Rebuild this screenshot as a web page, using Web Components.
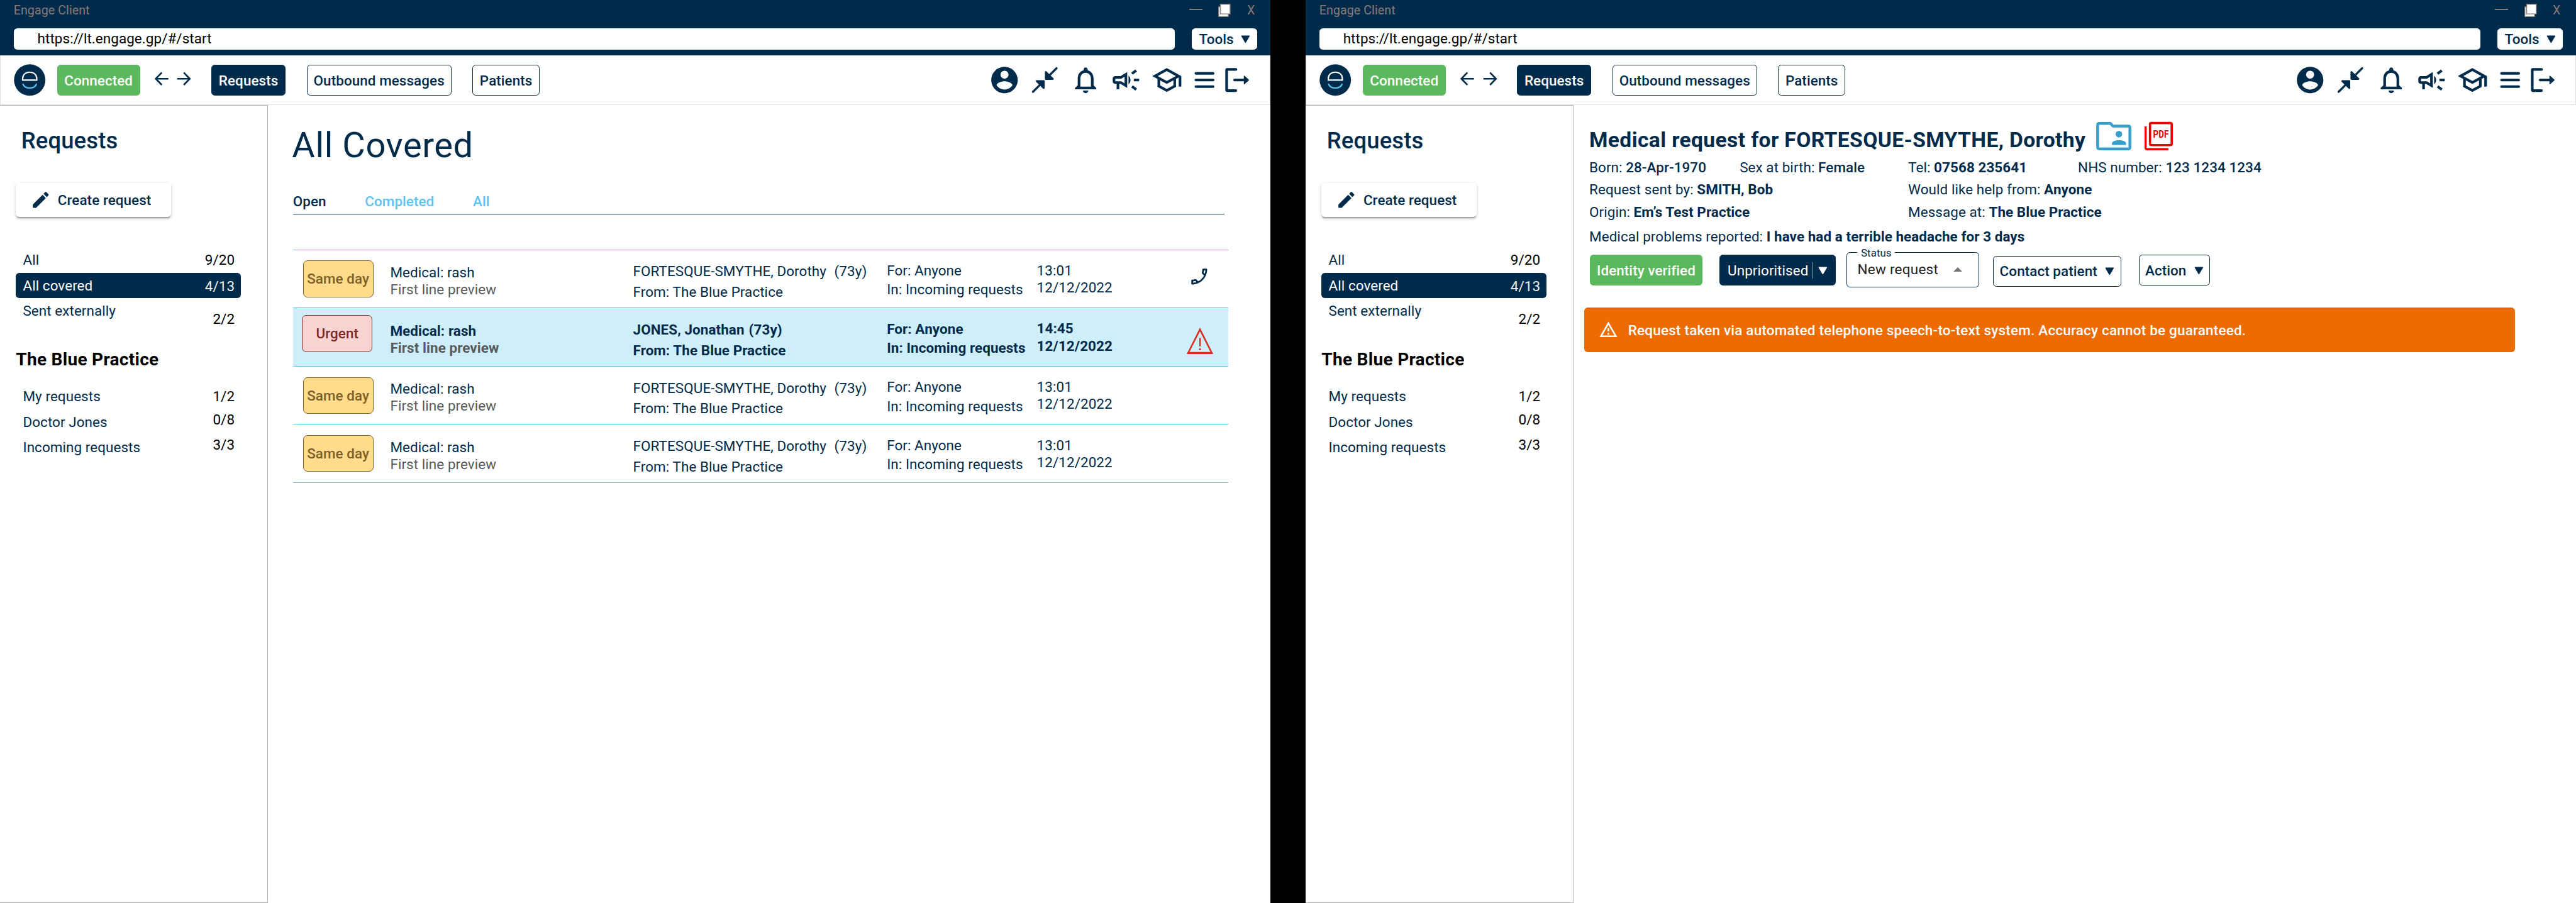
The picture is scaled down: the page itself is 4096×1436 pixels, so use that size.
<!DOCTYPE html>
<html lang="en">
<head>
<meta charset="utf-8">
<title>Engage Client</title>
<style>
  /* 1rem is ten layout pixels: two 1440px windows with a 40px gap make 292rem. */
  :root {
    font-size: calc(100vw / 292);
    --navy: #002b4b;
    --sky: #5bc4ef;
    --green: #5cb85c;
    --orange: #ed6c02;
    --line: #e0e0e0;
  }

  body {
    display: flex;
    gap: 4rem;
    height: 100vh;
    margin: 0;
    overflow: hidden;
    background: #000;
    color: var(--navy);
    font: 1.6rem/2rem Roboto, "Liberation Sans", sans-serif;
    letter-spacing: .005rem;
  }
</style>
</head>
<body>

<engage-window url="https://lt.engage.gp/#/start">
  <nav-sidebar slot="sidebar"></nav-sidebar>
  <request-list heading="All Covered">
    <request-row priority="Same day" name="FORTESQUE-SMYTHE, Dorothy" time="13:01" icon="phone"></request-row>
    <request-row priority="Urgent" name="JONES, Jonathan" time="14:45" icon="alert" unread></request-row>
    <request-row priority="Same day" name="FORTESQUE-SMYTHE, Dorothy" time="13:01"></request-row>
    <request-row priority="Same day" name="FORTESQUE-SMYTHE, Dorothy" time="13:01"></request-row>
  </request-list>
</engage-window>

<engage-window url="https://lt.engage.gp/#/start">
  <nav-sidebar slot="sidebar"></nav-sidebar>
  <request-detail></request-detail>
</engage-window>

<script>
/**
 * Attaches an open shadow root and fills it with the given markup.
 */
class BaseElement extends HTMLElement {
  connectedCallback() {
    if (this.shadowRoot) {
      return;
    }

    // Margins are reset by tag name: a universal rule would also
    // override the `:host` rules of the nested custom elements.
    const template = document.createElement('template');
    template.innerHTML = `
      <style>
        *, *::after, *::before { box-sizing: border-box; }
        h1, h2, h3, p { margin: 0; }
        :host { display: block; box-sizing: border-box; }
      </style>
      ${this.render()}
    `;

    this.attachShadow({ mode: 'open' });
    this.shadowRoot.appendChild(template.content.cloneNode(true));
  }

  attr(name) {
    return this.getAttribute(name) || '';
  }
}

/**
 * Each icon is a view box and the shapes inside of it.
 */
const ICONS = {
  logo: ['0 0 36 36', `
    <circle cx="18" cy="18" r="17.8"/>
    <path d="M10 18.1v-1.6c0-4.6 3.4-7.4 8-7.4s8 2.8 8 7.4v1.6z" fill="none" stroke="#fff" stroke-width="1.5"/>
    <path d="M10.2 22.2c1 3.3 4.2 4.9 7.8 4.9s6.8-1.6 7.8-4.9" fill="none" stroke="#5bc4ef" stroke-width="1.5"/>`],
  back: ['0 0 16 16', '<path d="M8 1 1.2 8 8 15M1.2 8H15.5" fill="none" stroke="currentColor" stroke-width="1.9"/>'],
  forward: ['0 0 16 16', '<path d="M8 1 14.8 8 8 15M14.8 8H.5" fill="none" stroke="currentColor" stroke-width="1.9"/>'],
  account: ['0 0 24 24', '<path d="M12 2C6.48 2 2 6.48 2 12s4.48 10 10 10 10-4.48 10-10S17.52 2 12 2zm0 3c1.66 0 3 1.34 3 3s-1.34 3-3 3-3-1.34-3-3 1.34-3 3-3zm0 14.2c-2.5 0-4.71-1.28-6-3.22.03-1.99 4-3.08 6-3.08 1.99 0 5.97 1.09 6 3.08-1.29 1.94-3.5 3.22-6 3.22z"/>'],
  collapse: ['0 0 24 24', `
    <g stroke="currentColor" stroke-linecap="round" stroke-linejoin="round">
      <path d="M20.9 3.1 15.5 8.5M3.1 20.9 8.500 15.500" stroke-width="1.6"/>
      <path d="M12.8 6v5.2h5.3zM11.2 18v-5.2H5.9z" stroke-width="1.4"/>
    </g>`],
  bell: ['0 0 24 24', '<path d="M12 22c1.1 0 2-.9 2-2h-4c0 1.1.9 2 2 2zm6-6v-5c0-3.07-1.63-5.64-4.5-6.32V4c0-.83-.67-1.5-1.5-1.5s-1.5.67-1.5 1.5v.68C7.64 5.36 6 7.92 6 11v5l-2 2v1h16v-1l-2-2zm-2 1H8v-6c0-2.48 1.51-4.5 4-4.5s4 2.02 4 4.5v6z"/>'],
  campaign: ['0 0 24 24', '<path d="M18 11v2h4v-2h-4zM16 17.61c.96.71 2.21 1.65 3.2 2.39.4-.53.8-1.07 1.2-1.6-.99-.74-2.24-1.68-3.2-2.4-.4.54-.8 1.08-1.2 1.61zM20.4 5.6c-.4-.53-.8-1.07-1.2-1.6-.99.74-2.24 1.68-3.2 2.4.4.53.8 1.07 1.2 1.6.96-.72 2.21-1.65 3.2-2.4zM4 9c-1.1 0-2 .9-2 2v2c0 1.1.9 2 2 2h1v4h2v-4h1l5 3V6L8 9H4zm5.03 1.71L11 9.53v4.94l-1.97-1.18-.48-.29H4v-2h4.55l.48-.29zM15.5 12c0-1.33-.58-2.53-1.5-3.35v6.69c.92-.81 1.5-2.01 1.5-3.34z"/>'],
  school: ['0 0 24 24', '<path d="M12 3 1 9l4 2.18v6L12 21l7-3.82v-6l2-1.09V17h2V9L12 3zm6.82 6L12 12.72 5.18 9 12 5.28 18.82 9zM17 15.99l-5 2.73-5-2.73v-3.72L12 15l5-2.73v3.72z"/>'],
  menu: ['0 0 24 24', '<path d="M5.5 7h13M5.5 12h13M5.5 17h13" stroke="currentColor" stroke-width="2" stroke-linecap="round"/>'],
  logout: ['0 0 24 24', `
    <path d="M11 4H4.5Q4 4 4 4.5v15q0 .5.5.5H11" fill="none" stroke="currentColor" stroke-width="2" stroke-linecap="round"/>
    <path d="M10 12h8" stroke="currentColor" stroke-width="2" stroke-linecap="round"/>
    <path d="M17.3 9v6l3.3-3z" stroke="currentColor" stroke-width=".6" stroke-linejoin="round"/>`],
  pencil: ['0 0 24 24', '<path d="M3 17.25V21h3.75L17.81 9.94l-3.75-3.75L3 17.25zM20.71 7.04c.39-.39.39-1.02 0-1.41l-2.34-2.34c-.39-.39-1.02-.39-1.41 0l-1.83 1.83 3.75 3.75 1.83-1.83z"/>'],
  phone: ['0 0 24 24', '<path transform="matrix(-1 0 0 1 24 0)" d="M6.54 5c.06.89.21 1.76.45 2.59l-1.2 1.2c-.41-1.2-.67-2.47-.76-3.79h1.51m9.86 12.02c.85.24 1.72.39 2.6.45v1.49c-1.32-.09-2.59-.35-3.8-.75l1.2-1.19M7.5 3H4c-.55 0-1 .45-1 1 0 9.39 7.61 17 17 17 .55 0 1-.45 1-1v-3.49c0-.55-.45-1-1-1-1.24 0-2.45-.2-3.57-.57-.1-.04-.21-.05-.31-.05-.26 0-.51.1-.71.29l-2.2 2.2c-2.83-1.45-5.15-3.76-6.59-6.59l2.2-2.2c.28-.28.36-.67.25-1.02C8.7 6.45 8.5 5.25 8.5 4c0-.55-.45-1-1-1z"/>'],
  alert: ['0 0 30 30', `
    <path fill-rule="evenodd" d="M15 0 30 30H0zM15 4.2 3.1 27.7h23.8z"/>
    <path d="M14.2 11.7h1.6v9.5h-1.6z"/><circle cx="15" cy="24.400" r="1.1"/>`],
  warning: ['0 0 24 24', '<path d="M12 5.99 19.53 19H4.47L12 5.99M12 2 1 21h22L12 2zm1 14h-2v2h2v-2zm0-6h-2v4h2v-4z"/>'],
  folder: ['0 0 40 32', `
    <path d="M3.5 1.6H16.2L19.1 4.6H36.5Q38.3 4.6 38.3 6.5V28.5Q38.3 30.4 36.5 30.4H3.5Q1.7 30.4 1.7 28.5V3.5Q1.7 1.6 3.5 1.6Z" fill="none" stroke="currentColor" stroke-width="3.2"/>
    <circle cx="25.8" cy="13.7" r="3.7"/>
    <path d="M17.9 26v-1.6c0-2.5 4-3.8 8-3.8s8 1.3 8 3.8V26z"/>`],
  pdf: ['0 0 32 32', `
    <rect x="6.2" y="1.2" width="24.6" height="25" rx="1.6" fill="none" stroke="currentColor" stroke-width="2.6"/>
    <path d="M1.2 5V29.2Q1.2 30.8 2.8 30.8H27" fill="none" stroke="currentColor" stroke-width="2.4"/>
    <text x="9.7" y="18" font-size="11.2" font-weight="700" textLength="17.6" lengthAdjust="spacingAndGlyphs">PDF</text>`],
  down: ['0 0 11 9', '<path d="M1.1.8h8.8L5.5 8.2z" stroke="currentColor" stroke-width="1.2" stroke-linejoin="round"/>'],
  up: ['0 0 10 5', '<path d="M0 5 5 0l5 5z"/>'],
  windows: ['0 0 14 15', '<g fill="#fff" stroke="currentColor"><path d="M.5 3.5h11v11H.5z"/><path d="M2.5.5h11v11h-11z"/></g>']
};

class AppIcon extends BaseElement {
  render() {
    const [viewBox, shapes] = ICONS[this.attr('name')];

    return `
      <style>
        :host { flex: none; width: 2.4rem; height: 2.4rem; letter-spacing: 0; }
        svg { display: block; width: 100%; height: 100%; overflow: visible; }
      </style>
      <svg viewBox="${viewBox}" fill="currentColor" aria-hidden="true">${shapes}</svg>
    `;
  }
}

/**
 * Button with the variants `primary`, `success`, `plain` and the default outline.
 */
class AppButton extends BaseElement {
  render() {
    return `
      <style>
        :host {
          display: flex;
          flex: none;
          align-items: center;
          justify-content: center;
          height: 3.5rem;
          border: .1rem solid var(--navy);
          border-radius: .4rem;
          background: #fff;
          font-weight: 500;
          white-space: nowrap;
        }
        :host([variant=primary]) { background: var(--navy); color: #fff; }
        :host([variant=success]) { border-color: var(--green); background: var(--green); color: #fff; }
        :host([variant=plain]) { border: 0; }
      </style>
      <slot></slot>
    `;
  }
}

/**
 * Frame of a client window: title bar, address bar, toolbar, sidebar and content.
 *
 * @slot sidebar - The navigation.
 * @slot - The main content.
 */
class EngageWindow extends BaseElement {
  render() {
    return `
      <style>
        :host {
          display: flex;
          flex: none;
          flex-direction: column;
          width: 144rem;
          height: 100vh;
          background: #fff;
        }
        header { height: 6.3rem; background: var(--navy); }
        .title {
          display: flex;
          height: 3.2rem;
          padding: 0 1.75rem 0 1.55rem;
          color: #857a78;
          font-size: 1.4rem;
        }
        .title span { padding-top: .22rem; }
        .title span:first-child { margin-right: auto; }
        .minimise { width: 1.5rem; height: 0; margin: 1rem 1.8rem 0 0; border-top: .145rem solid; }
        .title app-icon { width: 1.4rem; height: 1.5rem; margin: .4rem 1.85rem 0 0; }
        .address { display: flex; gap: 1.95rem; padding: 0 1.5rem 0 1.6rem; }
        .url {
          flex: 1;
          height: 2.4rem;
          padding: .15rem 2.65rem;
          border-radius: .4rem;
          background: #fff;
          color: #000;
        }
        .tools { width: 7.4rem; height: 2.4rem; gap: .8rem; padding-top: .05rem; }
        .tools app-icon { width: 1.05rem; height: .9rem; }
        .toolbar {
          display: flex;
          align-items: center;
          height: 5.6rem;
          padding: 0 1.9rem 0 1.5rem;
          border: .1rem solid var(--line);
        }
        .logo { width: 3.6rem; height: 3.6rem; margin-right: 1.3rem; color: var(--navy); }
        .arrow { width: 1.6rem; height: 1.6rem; margin-top: -.4rem; }
        .icons { display: flex; gap: 1rem; margin-left: auto; }
        .icons app-icon { width: 3.6rem; height: 3.6rem; }
        .body { display: flex; flex: 1; min-height: 0; }
        .content { flex: 1; min-width: 0; }
      </style>
      <header>
        <div class="title">
          <span>Engage Client</span>
          <div class="minimise"></div>
          <app-icon name="windows"></app-icon>
          <span>X</span>
        </div>
        <div class="address">
          <div class="url">${this.attr('url')}</div>
          <app-button class="tools" variant="plain">Tools<app-icon name="down"></app-icon></app-button>
        </div>
      </header>
      <div class="toolbar">
        <app-icon class="logo" name="logo"></app-icon>
        <app-button variant="success" style="width: 9.4rem">Connected</app-button>
        <app-icon class="arrow" name="back" style="margin-left: 1.7rem"></app-icon>
        <app-icon class="arrow" name="forward" style="margin-left: .9rem"></app-icon>
        <app-button variant="primary" style="width: 8.4rem; margin-left: 2.3rem">Requests</app-button>
        <app-button style="width: 16.4rem; margin-left: 2.4rem">Outbound messages</app-button>
        <app-button style="width: 7.6rem; margin-left: 2.4rem">Patients</app-button>
        <div class="icons">
          <app-icon name="account"></app-icon>
          <app-icon name="collapse"></app-icon>
          <app-icon name="bell"></app-icon>
          <app-icon name="campaign"></app-icon>
          <app-icon name="school"></app-icon>
          <app-icon name="menu" style="margin-left: -.3rem"></app-icon>
          <app-icon name="logout" style="margin-left: -.9rem"></app-icon>
        </div>
      </div>
      <div class="body">
        <slot name="sidebar"></slot>
        <div class="content"><slot></slot></div>
      </div>
    `;
  }
}

/**
 * Line of the navigation. `shift` moves the count down from the label.
 */
class NavItem extends BaseElement {
  render() {
    return `
      <style>
        :host {
          display: flex;
          justify-content: space-between;
          width: 25.5rem;
          height: 2.9rem;
          padding: 0 .7rem 0 .8rem;
          border-radius: .4rem;
          line-height: 2.9rem;
        }
        .count { color: #000; }
        :host([selected]) { background: var(--navy); color: #fff; }
        :host([selected]) .count { color: #f0f0f0; }
      </style>
      <span><slot></slot></span>
      <span class="count" style="margin-top: ${this.attr('shift') || 0}rem">${this.attr('count')}</span>
    `;
  }
}

class NavSidebar extends BaseElement {
  render() {
    return `
      <style>
        :host {
          flex: none;
          width: 30.4rem;
          padding: 2.4rem 1.8rem 0;
          border: 1px solid #b3b3b3;
          border-left: 0;
        }
        h2 { padding-left: .6rem; font: 500 2.6rem/3.2rem Roboto, sans-serif; letter-spacing: .01rem; }
        .create {
          justify-content: flex-start;
          width: 17.6rem;
          height: 3.8rem;
          margin: 3.2rem 0 3.45rem;
          padding-left: 1.6rem;
          gap: .75rem;
          box-shadow: 0 .1rem .5rem rgba(0, 0, 0, .12), 0 .2rem .2rem rgba(0, 0, 0, .14), 0 .3rem .1rem -.2rem rgba(0, 0, 0, .2);
        }
        h3 {
          margin: 2.87rem 0 1.5rem;
          color: #000;
          font: 700 2rem/2.4rem Roboto, sans-serif;
          letter-spacing: .02rem;
        }
      </style>
      <h2>Requests</h2>
      <app-button class="create" variant="plain"><app-icon name="pencil"></app-icon>Create request</app-button>
      <nav-item count="9/20">All</nav-item>
      <nav-item count="4/13" shift=".1" selected>All covered</nav-item>
      <nav-item count="2/2" shift=".9">Sent externally</nav-item>
      <h3>The Blue Practice</h3>
      <nav-item count="1/2">My requests</nav-item>
      <nav-item count="0/8" shift="-.26">Doctor Jones</nav-item>
      <nav-item count="3/3" shift="-.3">Incoming requests</nav-item>
    `;
  }
}

/**
 * Heading, tabs and the rows of requests.
 *
 * @slot - Contains the `<request-row>` elements.
 */
class RequestList extends BaseElement {
  render() {
    return `
      <style>
        :host { padding: 2.23rem 4.8rem 0 2.8rem; }
        h1 { margin-left: -.1rem; font: 400 4rem/4.8rem Roboto, sans-serif; letter-spacing: .04rem; }
        .tabs {
          display: flex;
          gap: 4.4rem;
          margin: 2.92rem .4rem 3.95rem 0;
          padding-bottom: .4rem;
          border-bottom: 1px solid var(--navy);
          font-weight: 500;
        }
        .tabs span + span { color: var(--sky); }
        .rows { border-bottom: 1px solid var(--sky); }
      </style>
      <h1>${this.attr('heading')}</h1>
      <div class="tabs"><span>Open</span><span>Completed</span><span>All</span></div>
      <div class="rows"><slot></slot></div>
    `;
  }
}

class RequestRow extends BaseElement {
  render() {
    const icon = this.attr('icon');
    const gap = this.hasAttribute('unread') ? '&nbsp;' : '&nbsp;&nbsp;';

    return `
      <style>
        :host {
          display: grid;
          grid-template-columns: 11.03rem 27.53rem 28.77rem 17rem 1fr;
          height: 6.6rem;
          border-top: 1px solid var(--sky);
          white-space: nowrap;
        }
        :host([unread]) { background: #ceeefa; font-weight: 700; }
        .badge {
          width: 8rem;
          height: 4.15rem;
          margin: 1.2rem 0 0 1.13rem;
          border: .1rem solid #7d6126;
          border-radius: .5rem;
          background: #ffdb8c;
          color: #7d6126;
          font-weight: 500;
          line-height: 4rem;
          text-align: center;
        }
        :host([priority=Urgent]) .badge {
          margin: .8rem 0 0 1.03rem;
          border-color: #7f2a27;
          background: #f8d3d2;
          color: #7f2a27;
        }
        .subject { padding-top: 1.6rem; line-height: 1.95rem; }
        .subject p + p { color: #5a5a5a; }
        .patient { padding-top: 1.27rem; line-height: 2.33rem; }
        .patient span { margin-left: .1rem; }
        .target { padding-top: 1.25rem; line-height: 2.16rem; }
        .date { padding-top: 1.38rem; line-height: 1.94rem; }
        .last { display: flex; justify-content: space-between; }
        .phone { margin: 1.85rem 2.1rem 0 0; }
        .alert { width: 3rem; height: 3rem; margin: 2.2rem 1.7rem 0 0; color: #dc291e; }
      </style>
      <div class="badge">${this.attr('priority')}</div>
      <div class="subject"><p>Medical: rash</p><p>First line preview</p></div>
      <div class="patient"><p>${this.attr('name')}${gap}<span>(73y)</span></p><p>From: The Blue Practice</p></div>
      <div class="target"><p>For: Anyone</p><p>In: Incoming requests</p></div>
      <div class="last">
        <div class="date"><p>${this.attr('time')}</p><p>12/12/2022</p></div>
        ${icon ? `<app-icon class="${icon}" name="${icon}"></app-icon>` : ''}
      </div>
    `;
  }
}

/**
 * Outlined select with its label set into the border.
 */
class StatusSelect extends BaseElement {
  render() {
    return `
      <style>
        :host { flex: none; width: 15rem; height: 4rem; }
        fieldset {
          display: flex;
          justify-content: space-between;
          height: 4.6rem;
          margin: -.6rem 0 0;
          padding: 0 1.85rem 0 1.15rem;
          border: .1rem solid var(--navy);
          border-radius: .4rem;
          color: #212121;
        }
        legend { padding: 0 .4rem; color: var(--navy); font-size: 1.2rem; line-height: 1.3rem; }
        span { padding-top: .25rem; letter-spacing: .02rem; }
        app-icon { width: 1rem; height: .5rem; margin-top: 1rem; color: #757575; }
      </style>
      <fieldset>
        <legend>${this.attr('label')}</legend>
        <span><slot></slot></span>
        <app-icon name="up"></app-icon>
      </fieldset>
    `;
  }
}

class RequestDetail extends BaseElement {
  render() {
    return `
      <style>
        .heading { display: flex; height: 5.1rem; padding: 1.9rem 0 0 1.75rem; }
        h1 {
          width: 57.44rem;
          margin-top: .57rem;
          font: 700 2.4rem/3rem Roboto, sans-serif;
          letter-spacing: .025rem;
          white-space: nowrap;
        }
        .folder { width: 4rem; height: 3.2rem; color: #389fca; }
        .pdf { width: 3.2rem; height: 3.2rem; margin-left: 1.5rem; color: #ee0000; }
        .facts {
          display: grid;
          grid-template-columns: 17.05rem 19.1rem 19.25rem 1fr;
          grid-template-rows: 2.5rem 2.58rem 2.8rem 2rem;
          margin: .95rem 0 .77rem 1.75rem;
          white-space: nowrap;
        }
        .wide { grid-column: span 2; }
        b { font-weight: 700; }
        b.medium { font-weight: 500; }
        .actions { display: flex; align-items: flex-start; padding-left: 1.8rem; }
        .actions > app-button { margin-top: .3rem; }
        .actions > app-button app-icon { width: 1.05rem; height: .9rem; margin-left: .9rem; }
        .priority { width: 13.2rem; margin: 0 1.23rem 0 1.9rem; font-weight: 400; }
        .priority i { width: 1px; height: 1.9rem; margin: 0 -.35rem 0 .5rem; background: #8fa3b2; }
        .banner {
          display: flex;
          align-items: center;
          width: 105.5rem;
          height: 5rem;
          margin: 2.3rem 0 0 1.18rem;
          padding-left: 1.62rem;
          gap: 1.15rem;
          border-radius: .4rem;
          background: var(--orange);
          color: #fff;
          font-weight: 500;
          letter-spacing: .016rem;
        }
        .banner app-icon { width: 2.2rem; height: 2.2rem; }
      </style>
      <div class="heading">
        <h1>Medical request for FORTESQUE-SMYTHE, Dorothy</h1>
        <app-icon class="folder" name="folder"></app-icon>
        <app-icon class="pdf" name="pdf"></app-icon>
      </div>
      <div class="facts">
        <p>Born: <b class="medium">28-Apr-1970</b></p>
        <p>Sex at birth: <b class="medium">Female</b></p>
        <p>Tel: <b>07568 235641</b></p>
        <p>NHS number: <b class="medium">123 1234 1234</b></p>
        <p class="wide">Request sent by: <b>SMITH, Bob</b></p>
        <p class="wide">Would like help from: <b>Anyone</b></p>
        <p class="wide">Origin: <b>Em’s Test Practice</b></p>
        <p class="wide">Message at: <b>The Blue Practice</b></p>
        <p class="wide">Medical problems reported: <b>I have had a terrible headache for 3 days</b></p>
      </div>
      <div class="actions">
        <app-button variant="success" style="width: 12.8rem">Identity verified</app-button>
        <app-button class="priority" variant="primary">Unprioritised<i></i><app-icon name="down"></app-icon></app-button>
        <status-select label="Status">New request</status-select>
        <app-button style="width: 14.5rem; margin: .4rem 2rem 0 1.6rem">Contact patient<app-icon name="down"></app-icon></app-button>
        <app-button style="width: 8.1rem">Action<app-icon name="down"></app-icon></app-button>
      </div>
      <div class="banner">
        <app-icon name="warning"></app-icon>
        <span>Request taken via automated telephone speech-to-text system. Accuracy cannot be guaranteed.</span>
      </div>
    `;
  }
}

customElements.define('app-icon', AppIcon);
customElements.define('app-button', AppButton);
customElements.define('engage-window', EngageWindow);
customElements.define('nav-item', NavItem);
customElements.define('nav-sidebar', NavSidebar);
customElements.define('request-list', RequestList);
customElements.define('request-row', RequestRow);
customElements.define('status-select', StatusSelect);
customElements.define('request-detail', RequestDetail);
</script>
</body>
</html>
